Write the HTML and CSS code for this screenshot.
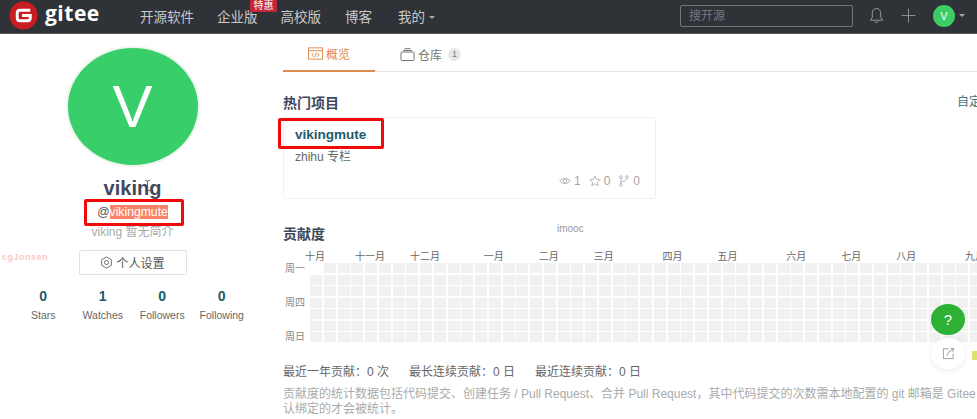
FILE: index.html
```html
<!DOCTYPE html>
<html lang="zh-CN">
<head>
<meta charset="UTF-8">
<meta name="viewport" content="width=device-width, initial-scale=1.0">
<title>viking - Gitee</title>
<link rel="stylesheet" href="styles.css">
</head>
<body>
<header class="navbar">
    <a class="brand">
        <svg class="brand-logo" viewBox="0 0 30 30">
            <circle cx="15" cy="15" r="14.5" fill="#c71d23"/>
            <path d="M22 9.5H11.5Q8.5 9.5 8.5 12.5V17.5Q8.5 20.5 11.5 20.5H19Q22 20.5 22 17.5V15H13.5" fill="none" stroke="#fff" stroke-width="3"/>
        </svg>
        <span class="brand-name">gitee</span>
    </a>
    <nav class="nav-links">
        <a>开源软件</a>
        <a class="has-badge">企业版<span class="badge">特惠</span></a>
        <a>高校版</a>
        <a class="nav-blog">博客</a>
        <a class="nav-mine">我的<i class="caret"></i></a>
    </nav>
    <div class="nav-right">
        <div class="search">搜开源</div>
        <svg class="nav-icon bell" viewBox="0 0 16 18" fill="none" stroke="#9a9da2" stroke-width="1">
            <path d="M8 1.5C4.8 1.5 3.5 4 3.5 7V11L1.5 14H14.5L12.5 11V7C12.5 4 11.2 1.5 8 1.5Z"/>
            <path d="M6 15.5Q8 17.5 10 15.5"/>
        </svg>
        <svg class="nav-icon plus" viewBox="0 0 16 16" stroke="#8f9297" stroke-width="1">
            <path d="M8 0.5V15.5M0.5 8H15.5"/>
        </svg>
        <span class="nav-avatar">V</span>
        <i class="caret"></i>
    </div>
</header>

<div class="page">
    <aside class="sidebar">
        <div class="avatar">V</div>
        <h1 class="user-name">viking</h1>
        <p class="user-login">@<span class="selected">vikingmute</span></p>
        <p class="user-bio">viking 暂无简介</p>
        <button class="settings-btn">
            <svg viewBox="0 0 14 14" fill="none" stroke="#666" stroke-width="1">
                <path d="M7 1L12.2 4V10L7 13L1.8 10V4Z"/>
                <circle cx="7" cy="7" r="2.2"/>
            </svg>
            个人设置
        </button>
        <div class="user-stats">
            <div class="stat"><strong>0</strong><span>Stars</span></div>
            <div class="stat"><strong>1</strong><span>Watches</span></div>
            <div class="stat"><strong>0</strong><span>Followers</span></div>
            <div class="stat"><strong>0</strong><span>Following</span></div>
        </div>
    </aside>

    <main class="content">
        <div class="tabs">
            <a class="tab active">
                <svg viewBox="0 0 16 13" fill="none" stroke="#e08a4f" stroke-width="1">
                    <rect x="0.5" y="0.5" width="15" height="12"/>
                    <path d="M0.5 3.5H15.5M6 6L4 8L6 10M10 6L12 8L10 10M8.8 5.5L7.2 10.5"/>
                </svg>
                概览
            </a>
            <a class="tab">
                <svg viewBox="0 0 14 13" fill="none" stroke="#777" stroke-width="1">
                    <rect x="0.5" y="4" width="13" height="8.5" rx="1"/>
                    <path d="M2.5 2.5H11.5M4 0.7H10"/>
                </svg>
                仓库<span class="count">1</span>
            </a>
        </div>

        <div class="section-head">
            <h2>热门项目</h2>
            <a class="customize">自定义常用</a>
        </div>
        <div class="project-card">
            <a class="project-name">vikingmute</a>
            <p class="project-desc">zhihu 专栏</p>
            <div class="project-meta">
                <svg class="eye" viewBox="0 0 14 10" fill="none" stroke="#a5a5a5" stroke-width="0.9">
                    <path d="M0.8 5Q7 -1.5 13.2 5Q7 11.5 0.8 5Z"/>
                    <circle cx="7" cy="5" r="2"/>
                </svg>
                <span>1</span>
                <svg viewBox="0 0 14 14" fill="none" stroke="#a5a5a5" stroke-width="0.9">
                    <path d="M7 1L8.8 5L13 5.4L9.8 8.2L10.8 12.6L7 10.3L3.2 12.6L4.2 8.2L1 5.4L5.2 5Z"/>
                </svg>
                <span>0</span>
                <svg viewBox="0 0 12 14" fill="none" stroke="#a5a5a5" stroke-width="0.9">
                    <circle cx="2.5" cy="2.5" r="1.6"/>
                    <circle cx="2.5" cy="11.5" r="1.6"/>
                    <circle cx="9.5" cy="2.5" r="1.6"/>
                    <path d="M2.5 4V10M9.5 4Q9.5 7 2.5 8"/>
                </svg>
                <span>0</span>
            </div>
        </div>

        <h2 class="contrib-title">贡献度</h2>
        <div class="months" id="months"></div>
        <div class="contrib-body">
            <div class="weekdays">
                <span>周一</span>
                <span>周四</span>
                <span>周日</span>
            </div>
            <div class="cells" id="cells"></div>
        </div>
        <div class="contrib-summary">
            <span>最近一年贡献：0 次</span>
            <span>最长连续贡献：0 日</span>
            <span>最近连续贡献：0 日</span>
        </div>
        <p class="contrib-note">贡献度的统计数据包括代码提交、创建任务 / Pull Request、合并 Pull Request，其中代码提交的次数需本地配置的 git 邮箱是 Gitee 帐号确认绑定的才会被统计。</p>
    </main>
</div>

<!-- things drawn over the page -->
<div class="mark mark-login"></div>
<div class="mark mark-project"></div>
<span class="watermark wm-left">cgJonsen</span>
<span class="watermark wm-mid">imooc</span>
<svg class="text-cursor" viewBox="0 0 8 14" fill="none" stroke="#555" stroke-width="1">
    <path d="M1 1Q4 1 4 3V11Q4 13 1 13M7 1Q4 1 4 3M4 11Q4 13 7 13"/>
</svg>
<a class="float-help">?</a>
<a class="float-share">
    <svg viewBox="0 0 14 14" fill="none" stroke="#999" stroke-width="1">
        <path d="M7 2H1.5V12.5H12V7M5 9.5Q6 5 12.5 2M9 1.5L12.8 1.8L11.5 5.5"/>
    </svg>
</a>
<i class="legend-cell"></i>

<script src="script.js"></script>
</body>
</html>
```

FILE: styles.css
```css
* {
    box-sizing: border-box;
}
html, body {
    height: 100%;
}
body {
    margin: 0;
    overflow: hidden;
    position: relative;
    background-color: #fff;
    color: #40485b;
    font-family: "Liberation Sans", "Noto Sans CJK SC", sans-serif;
}
h1, h2, p {
    margin: 0;
}

/* navbar */
.navbar {
    display: flex;
    align-items: center;
    height: 34px;
    padding: 0 12px 2px 5px;
    background-color: #2f3237;
    border-bottom: 1px solid #5a5c60;
    color: #c8c9cb;
    font-size: 13.5px;
}
.brand {
    display: flex;
    align-items: center;
    width: 135px;
}
.brand-logo {
    width: 29px;
    height: 29px;
    margin: 0 0 0 4px;
}
.brand-name {
    margin-left: 7px;
    color: #fff;
    font-family: "Open Sans", sans-serif;
    font-size: 21px;
    font-weight: 700;
    letter-spacing: 0.5px;
    line-height: 1;
    position: relative;
    top: -2px;
}
.nav-links {
    display: flex;
    gap: 23px;
}
.nav-links a {
    position: relative;
}
.nav-links .nav-blog {
    margin-left: 1px;
}
.nav-links .nav-mine {
    margin-left: 3px;
}
.badge {
    position: absolute;
    top: -6px;
    left: 33px;
    width: 27px;
    height: 12px;
    background-color: #c4253a;
    border-radius: 1px;
    color: #fff;
    font-size: 10px;
    line-height: 12px;
    text-align: center;
}
.caret {
    display: inline-block;
    width: 0;
    height: 0;
    margin-left: 4px;
    vertical-align: middle;
    border: 3px solid transparent;
    border-top: 3px solid #aaa;
    border-bottom: 0;
}
.nav-right {
    display: flex;
    align-items: center;
    margin-left: auto;
}
.search {
    width: 173px;
    height: 22px;
    padding-left: 8px;
    border: 1px solid #74777b;
    border-radius: 2px;
    color: #75787c;
    font-size: 12px;
    line-height: 20px;
}
.nav-icon.bell {
    width: 15px;
    height: 17px;
    margin-left: 16px;
}
.nav-icon.plus {
    width: 15px;
    height: 15px;
    margin-left: 17px;
}
.nav-avatar {
    width: 22px;
    height: 22px;
    margin-left: 17px;
    background-color: #3ccb64;
    border-radius: 50%;
    color: #fff;
    font-size: 11px;
    line-height: 22px;
    text-align: center;
}

/* page */
.page {
    display: flex;
}
.sidebar {
    display: flex;
    flex: 0 0 265px;
    flex-direction: column;
    align-items: center;
    padding-top: 12px;
}
.avatar {
    width: 134px;
    height: 121px;
    background-color: #38cf6a;
    border: 2px solid #eef5ee;
    border-radius: 50%;
    color: #fff;
    font-size: 60px;
    line-height: 117px;
    text-align: center;
}
.user-name {
    margin-top: 9px;
    font-size: 20px;
    line-height: 24px;
}
.user-login {
    margin-top: 4px;
    color: #555;
    font-size: 12.2px;
    line-height: 16px;
}
.selected {
    background-color: #fb8468;
    color: #fff;
}
.user-bio {
    margin-top: 4px;
    color: #aaa;
    font-size: 12px;
    line-height: 16px;
}
.settings-btn {
    display: flex;
    align-items: center;
    justify-content: center;
    gap: 3px;
    width: 108px;
    height: 25px;
    margin-top: 10px;
    padding: 0;
    background-color: #fff;
    border: 1px solid #dfe1e4;
    border-radius: 2px;
    color: #555;
    font-family: inherit;
    font-size: 12px;
}
.settings-btn svg {
    width: 13px;
    height: 13px;
}
.user-stats {
    display: grid;
    grid-template-columns: repeat(4, 59.5px);
    margin-top: 13px;
}
.stat {
    display: flex;
    flex-direction: column;
    align-items: center;
}
.stat strong {
    color: #1d5c6b;
    font-size: 14px;
    line-height: 16px;
}
.stat span {
    margin-top: 4px;
    color: #666;
    font-size: 10.5px;
    line-height: 14px;
    white-space: nowrap;
}

/* main column */
.content {
    flex: 1;
    min-width: 0;
    padding: 6px 0 0 18px;
}
.tabs {
    display: flex;
    height: 32px;
    border-bottom: 1px solid #e5e5e5;
}
.tab {
    display: flex;
    align-items: center;
    gap: 3px;
    width: 92px;
    height: 32px;
    padding: 0 0 4px 25px;
    color: #777;
    font-size: 12px;
    white-space: nowrap;
}
.tab svg {
    flex: none;
    width: 15px;
    height: 13px;
}
.tab.active {
    border-bottom: 2px solid #e08a4f;
    color: #e08a4f;
}
.count {
    flex: none;
    width: 13px;
    height: 13px;
    margin-left: 3px;
    background-color: #e8e8e8;
    border-radius: 50%;
    font-size: 9px;
    line-height: 13px;
    text-align: center;
}
.section-head {
    display: flex;
    justify-content: space-between;
    margin-top: 21px;
    white-space: nowrap;
}
h2 {
    color: #40485b;
    font-size: 14px;
    line-height: 20px;
}
.customize {
    width: 20px;
    color: #3f7480;
    font-size: 12px;
    line-height: 18px;
}
.project-card {
    width: 373px;
    height: 82px;
    margin-top: 4px;
    padding: 9px 11px;
    border: 1px solid #f1f1f1;
    border-radius: 2px;
}
.project-name {
    display: block;
    color: #1d5c6b;
    font-size: 13.5px;
    font-weight: 700;
    line-height: 16px;
}
.project-desc {
    margin-top: 6px;
    color: #666;
    font-size: 12px;
    line-height: 16px;
}
.project-meta {
    display: flex;
    align-items: center;
    justify-content: flex-end;
    gap: 3px;
    margin-top: 8px;
    margin-right: 4px;
    color: #a5a5a5;
    font-size: 12px;
    line-height: 16px;
}
.project-meta svg {
    width: 12px;
    height: 12px;
}
.project-meta span {
    margin-right: 5px;
}
.project-meta span:last-child {
    margin-right: 0;
}
.contrib-title {
    margin-top: 25px;
}
.months {
    display: flex;
    height: 14px;
    margin: 6px 0 0 32px;
    color: #666;
    font-size: 10px;
    line-height: 14px;
}
.month {
    flex: none;
    white-space: nowrap;
}
.month span {
    display: inline-block;
    transform: translateX(-50%);
}
.contrib-body {
    display: flex;
    margin-top: -1px;
}
.weekdays {
    display: flex;
    flex: 0 0 27px;
    flex-direction: column;
    gap: 22px;
    padding: 0 0 0 2px;
    color: #888;
    font-size: 10px;
    line-height: 12px;
}
.cells {
    display: grid;
    grid-template-columns: repeat(49, 12px);
    grid-auto-rows: 10px;
    gap: 1.5px 1.75px;
    flex: none;
}
.cell {
    background-color: #f1f1f1;
}
.cell.empty {
    background-color: transparent;
}
.contrib-summary {
    display: flex;
    gap: 20px;
    margin-top: 21px;
    color: #666;
    font-size: 12px;
    line-height: 16px;
}
.contrib-note {
    width: 735px;
    margin-top: 7px;
    color: #aaa;
    font-size: 12px;
    line-height: 15px;
}

/* annotations and floating buttons */
.mark {
    position: absolute;
    border: 3px solid #f00a0a;
    border-radius: 2px;
}
.mark-login {
    top: 199px;
    left: 84px;
    width: 100px;
    height: 27px;
}
.mark-project {
    top: 118px;
    left: 278px;
    width: 106px;
    height: 31px;
}
.watermark {
    position: absolute;
    font-size: 9px;
}
.wm-left {
    top: 252px;
    left: 2px;
    color: #fbc9c2;
    font-weight: 700;
    letter-spacing: 0.5px;
}
.wm-mid {
    top: 223px;
    left: 557px;
    color: #999;
    font-size: 10px;
}
.text-cursor {
    position: absolute;
    top: 179px;
    left: 144px;
    width: 7px;
    height: 13px;
}
.float-help {
    position: absolute;
    top: 304px;
    left: 931px;
    width: 34px;
    height: 31px;
    background-color: #2eb135;
    border-radius: 50%;
    color: #fff;
    font-size: 15px;
    line-height: 31px;
    text-align: center;
}
.float-share {
    display: flex;
    align-items: center;
    justify-content: center;
    position: absolute;
    top: 338px;
    left: 931px;
    width: 34px;
    height: 31px;
    background-color: #fff;
    border-radius: 50%;
    box-shadow: 0 1px 6px rgba(0, 0, 0, 0.08);
}
.float-share svg {
    width: 13px;
    height: 13px;
}
.legend-cell {
    position: absolute;
    top: 351px;
    left: 972px;
    width: 5px;
    height: 9px;
    background-color: #dbe36c;
}
```

FILE: script.js
```js
// weeks each month label covers on the contribution chart
var monthWeeks = [
    ["十月", 4], ["十一月", 4], ["十二月", 5], ["一月", 4],
    ["二月", 4], ["三月", 5], ["四月", 4], ["五月", 5],
    ["六月", 4], ["七月", 4], ["八月", 5], ["九月", 4]
];
var months = document.getElementById("months");
monthWeeks.forEach(function (m) {
    var el = document.createElement("div");
    el.className = "month";
    el.style.width = m[1] * 13.75 + "px";
    el.innerHTML = "<span>" + m[0] + "</span>";
    months.appendChild(el);
});

// fill by column: 49 weeks of 7 days, first monday is empty
var cells = document.getElementById("cells");
for (var day = 0; day < 7; day++) {
    for (var week = 0; week < 49; week++) {
        var cell = document.createElement("div");
        cell.className = day === 0 && week === 0 ? "cell empty" : "cell";
        cells.appendChild(cell);
    }
}
```
